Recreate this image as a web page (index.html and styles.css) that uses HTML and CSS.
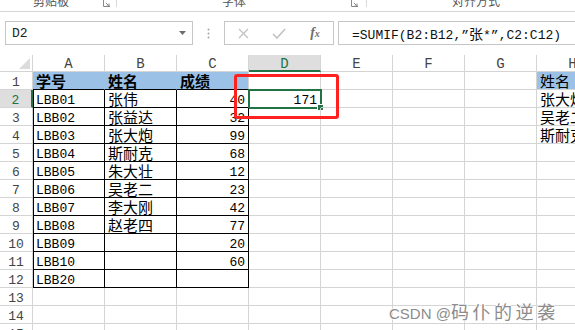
FILE: index.html
```html
<!DOCTYPE html>
<html lang="zh-CN">
<head>
  <meta charset="UTF-8" />
  <title>SUMIF 通配符求和</title>
  <link rel="stylesheet" href="styles.css">
</head>
<body>
  <!-- ribbon group labels, only the bottom edge is visible -->
  <div class="ribbon">
    <div class="group group-clip">
      <span class="group-label">剪贴板</span>
      <svg class="launcher" viewBox="0 0 7 7"><path d="M0.5 0v6.5H7" fill="none" stroke="#8a8a8a"/><path d="M3 3l3 3M6 3.5V6H3.5" fill="none" stroke="#8a8a8a"/></svg>
    </div>
    <div class="group group-font">
      <span class="group-label">字体</span>
      <svg class="launcher" viewBox="0 0 7 7"><path d="M0.5 0v6.5H7" fill="none" stroke="#8a8a8a"/><path d="M3 3l3 3M6 3.5V6H3.5" fill="none" stroke="#8a8a8a"/></svg>
    </div>
    <div class="group group-align">
      <span class="group-label">对齐方式</span>
    </div>
  </div>

  <div class="formula-bar">
    <div class="name-box">
      <span>D2</span>
      <svg class="drop" viewBox="0 0 7 4"><path d="M0 0h7L3.5 4z" fill="#6d6d6d"/></svg>
    </div>
    <div class="grip">
      <svg viewBox="0 0 3 11" width="3" height="11"><circle cx="1.5" cy="1.5" r="1" fill="#a6a6a6"/><circle cx="1.5" cy="5.5" r="1" fill="#a6a6a6"/><circle cx="1.5" cy="9.5" r="1" fill="#a6a6a6"/></svg>
    </div>
    <div class="fx-buttons">
      <span class="fx-btn"><svg viewBox="0 0 11 11" width="11" height="11"><path d="M1 1l9 9M10 1l-9 9" stroke="#c2c2c2" stroke-width="1.3"/></svg></span>
      <span class="fx-btn"><svg viewBox="0 0 14 11" width="14" height="11"><path d="M1 6l4 4 8-9" fill="none" stroke="#c2c2c2" stroke-width="1.6"/></svg></span>
      <span class="fx-btn fx-label">f<small>x</small></span>
    </div>
    <div class="formula">=SUMIF(B2:B12,”<span class="cjk">张</span>*”,C2:C12)</div>
  </div>

  <div class="sheet">
    <div class="row head-row">
      <div class="ch corner"><svg viewBox="0 0 11 11" width="11" height="11"><path d="M11 0v11H0z" fill="#dcdcdc"/></svg></div>
      <div class="ch">A</div>
      <div class="ch">B</div>
      <div class="ch">C</div>
      <div class="ch on">D</div>
      <div class="ch">E</div>
      <div class="ch">F</div>
      <div class="ch">G</div>
      <div class="ch">H</div>
    </div>

    <div class="row">
      <div class="cell rh">1</div>
      <div class="cell cn hd join">学号</div>
      <div class="cell cn hd join">姓名</div>
      <div class="cell cn hd">成绩</div>
      <div class="cell"></div>
      <div class="cell"></div>
      <div class="cell"></div>
      <div class="cell"></div>
      <div class="cell cn fill">姓名</div>
    </div>
    <div class="row">
      <div class="cell rh on">2</div>
      <div class="cell bx bl">LBB01</div>
      <div class="cell cn bx">张伟</div>
      <div class="cell num bx">40</div>
      <div class="cell num active">171<span class="handle"></span></div>
      <div class="cell"></div>
      <div class="cell"></div>
      <div class="cell"></div>
      <div class="cell cn">张大炮</div>
    </div>
    <div class="row">
      <div class="cell rh">3</div>
      <div class="cell bx bl">LBB02</div>
      <div class="cell cn bx">张益达</div>
      <div class="cell num bx">32</div>
      <div class="cell"></div>
      <div class="cell"></div>
      <div class="cell"></div>
      <div class="cell"></div>
      <div class="cell cn">吴老二</div>
    </div>
    <div class="row">
      <div class="cell rh">4</div>
      <div class="cell bx bl">LBB03</div>
      <div class="cell cn bx">张大炮</div>
      <div class="cell num bx">99</div>
      <div class="cell"></div>
      <div class="cell"></div>
      <div class="cell"></div>
      <div class="cell"></div>
      <div class="cell cn">斯耐克</div>
    </div>
    <div class="row">
      <div class="cell rh">5</div>
      <div class="cell bx bl">LBB04</div>
      <div class="cell cn bx">斯耐克</div>
      <div class="cell num bx">68</div>
      <div class="cell"></div>
      <div class="cell"></div>
      <div class="cell"></div>
      <div class="cell"></div>
      <div class="cell"></div>
    </div>
    <div class="row">
      <div class="cell rh">6</div>
      <div class="cell bx bl">LBB05</div>
      <div class="cell cn bx">朱大壮</div>
      <div class="cell num bx">12</div>
      <div class="cell"></div>
      <div class="cell"></div>
      <div class="cell"></div>
      <div class="cell"></div>
      <div class="cell"></div>
    </div>
    <div class="row">
      <div class="cell rh">7</div>
      <div class="cell bx bl">LBB06</div>
      <div class="cell cn bx">吴老二</div>
      <div class="cell num bx">23</div>
      <div class="cell"></div>
      <div class="cell"></div>
      <div class="cell"></div>
      <div class="cell"></div>
      <div class="cell"></div>
    </div>
    <div class="row">
      <div class="cell rh">8</div>
      <div class="cell bx bl">LBB07</div>
      <div class="cell cn bx">李大刚</div>
      <div class="cell num bx">42</div>
      <div class="cell"></div>
      <div class="cell"></div>
      <div class="cell"></div>
      <div class="cell"></div>
      <div class="cell"></div>
    </div>
    <div class="row">
      <div class="cell rh">9</div>
      <div class="cell bx bl">LBB08</div>
      <div class="cell cn bx">赵老四</div>
      <div class="cell num bx">77</div>
      <div class="cell"></div>
      <div class="cell"></div>
      <div class="cell"></div>
      <div class="cell"></div>
      <div class="cell"></div>
    </div>
    <div class="row">
      <div class="cell rh">10</div>
      <div class="cell bx bl">LBB09</div>
      <div class="cell bx"></div>
      <div class="cell num bx">20</div>
      <div class="cell"></div>
      <div class="cell"></div>
      <div class="cell"></div>
      <div class="cell"></div>
      <div class="cell"></div>
    </div>
    <div class="row">
      <div class="cell rh">11</div>
      <div class="cell bx bl">LBB10</div>
      <div class="cell bx"></div>
      <div class="cell num bx">60</div>
      <div class="cell"></div>
      <div class="cell"></div>
      <div class="cell"></div>
      <div class="cell"></div>
      <div class="cell"></div>
    </div>
    <div class="row">
      <div class="cell rh">12</div>
      <div class="cell bx bl">LBB20</div>
      <div class="cell bx"></div>
      <div class="cell num bx"></div>
      <div class="cell"></div>
      <div class="cell"></div>
      <div class="cell"></div>
      <div class="cell"></div>
      <div class="cell"></div>
    </div>
    <div class="row">
      <div class="cell rh">13</div>
      <div class="cell"></div>
      <div class="cell"></div>
      <div class="cell"></div>
      <div class="cell"></div>
      <div class="cell"></div>
      <div class="cell"></div>
      <div class="cell"></div>
      <div class="cell"></div>
    </div>
    <div class="row">
      <div class="cell rh">14</div>
      <div class="cell"></div>
      <div class="cell"></div>
      <div class="cell"></div>
      <div class="cell"></div>
      <div class="cell"></div>
      <div class="cell"></div>
      <div class="cell"></div>
      <div class="cell"></div>
    </div>
    <div class="row">
      <div class="cell rh">15</div>
      <div class="cell"></div>
      <div class="cell"></div>
      <div class="cell"></div>
      <div class="cell"></div>
      <div class="cell"></div>
      <div class="cell"></div>
      <div class="cell"></div>
      <div class="cell"></div>
    </div>

    <!-- red annotation round the result cell -->
    <div class="mark"></div>
  </div>

  <div class="watermark">CSDN @<span class="wm-cn">码仆的逆袭</span></div>
</body>
</html>
```

FILE: styles.css
```css
* {
  box-sizing: border-box;
}

body {
  margin: 0;
  width: 575px;
  height: 330px;
  overflow: hidden;
  position: relative;
  background: #fff;
  color: #000;
  font-family: "Liberation Mono", "Noto Sans CJK SC", monospace;
}

/* ribbon */
.ribbon {
  display: flex;
  align-items: flex-start;
  height: 12px;
  border-bottom: 1px solid #d5d5d5;
  overflow: hidden;
}

.group {
  display: flex;
  align-items: flex-end;
  height: 7px;
  border-right: 1px solid #dadada;
}

.group-label {
  font-family: "Noto Sans CJK SC", sans-serif;
  font-size: 12px;
  line-height: 12px;
  color: #555;
  white-space: nowrap;
}

.launcher {
  width: 7px;
  height: 7px;
  margin-left: auto;
}

.group-clip {
  width: 117px;
  padding-left: 33px;
  padding-right: 6px;
}

.group-font {
  width: 250px;
  padding-left: 105px;
  padding-right: 8px;
}

.group-align {
  border-right: none;
  padding-left: 85px;
}

/* formula bar */
.formula-bar {
  display: flex;
  align-items: flex-start;
  height: 43px;
  padding: 9px 0 0 5px;
}

.name-box {
  display: flex;
  align-items: center;
  width: 188px;
  height: 24px;
  padding: 0 6px;
  border: 1px solid #c6c6c6;
  font-size: 13px;
  color: #222;
}

.drop {
  width: 7px;
  height: 4px;
  margin-left: auto;
}

.grip {
  display: flex;
  justify-content: center;
  align-items: center;
  width: 31px;
  height: 24px;
}

.fx-buttons {
  display: flex;
  width: 110px;
  height: 24px;
  border: 1px solid #c6c6c6;
}

.fx-btn {
  display: flex;
  justify-content: center;
  align-items: center;
  width: 36px;
}

.fx-label {
  font-family: "Liberation Serif", serif;
  font-style: italic;
  font-weight: 700;
  font-size: 14px;
  color: #6f6f6f;
}

.fx-label small {
  font-size: 10px;
}

.formula {
  flex: 1;
  height: 24px;
  margin: 0 -10px 0 4px;
  padding-left: 13px;
  border: 1px solid #c6c6c6;
  font-size: 13px;
  line-height: 22px;
  color: #111;
  white-space: nowrap;
}

.formula .cjk {
  font-family: "Noto Sans CJK SC", sans-serif;
  font-size: 14px;
}

/* sheet */
.sheet {
  position: relative;
  width: 575px;
  overflow: hidden;
}

.row {
  display: grid;
  grid-template-columns: 33px repeat(8, 72px);
  height: 18px;
}

.head-row {
  height: 17px;
}

.ch {
  height: 17px;
  padding-top: 2px;
  border-right: 1px solid #d4d4d4;
  border-bottom: 1px solid #d4d4d4;
  text-align: center;
  font-size: 14px;
  line-height: 15px;
  color: #444;
}

.ch.on {
  background: #dedede;
  color: #217346;
  border-bottom: 2px solid #217346;
}

.corner {
  display: flex;
  justify-content: flex-end;
  padding: 3px 2px 0 0;
}

.cell {
  position: relative;
  height: 18px;
  padding: 2px 3px 0;
  border-right: 1px solid #d4d4d4;
  border-bottom: 1px solid #d4d4d4;
  font-size: 13px;
  line-height: 17px;
  white-space: nowrap;
  overflow: hidden;
}

.cn {
  padding-top: 0;
  font-family: "Noto Sans CJK SC", sans-serif;
  font-size: 15px;
}

.num {
  text-align: right;
}

.rh {
  text-align: center;
  color: #444;
}

.rh.on {
  background: #dedede;
  color: #217346;
  border-right: 2px solid #217346;
}

.hd {
  background: #9bc2e6;
  border-bottom-color: #000;
  font-weight: 700;
}

.hd.join {
  border-right-color: #9bc2e6;
}

.fill {
  background: #9bc2e6;
  border-right-color: #9bc2e6;
}

.bx {
  border-right-color: #000;
  border-bottom-color: #000;
}

.bl {
  box-shadow: inset 1px 0 0 #000;
}

.active {
  overflow: visible;
  outline: 2px solid #217346;
  outline-offset: -1px;
}

.handle {
  position: absolute;
  right: -4px;
  bottom: -4px;
  width: 7px;
  height: 7px;
  background: #217346;
  border: 1px solid #fff;
}

.mark {
  position: absolute;
  left: 234px;
  top: 19px;
  width: 105px;
  height: 45px;
  border: 3px solid #ff2020;
  border-radius: 3px;
}

.watermark {
  position: absolute;
  left: 389px;
  top: 300px;
  font-family: "Liberation Sans", "Noto Sans CJK SC", sans-serif;
  font-size: 15px;
  line-height: 22px;
  color: #8c8c8c;
  white-space: nowrap;
  text-shadow: 1px 0 #fff, -1px 0 #fff, 0 1px #fff, 0 -1px #fff;
}

.wm-cn {
  font-family: "Noto Sans CJK SC", sans-serif;
  font-size: 18px;
  letter-spacing: 3.5px;
}
```
